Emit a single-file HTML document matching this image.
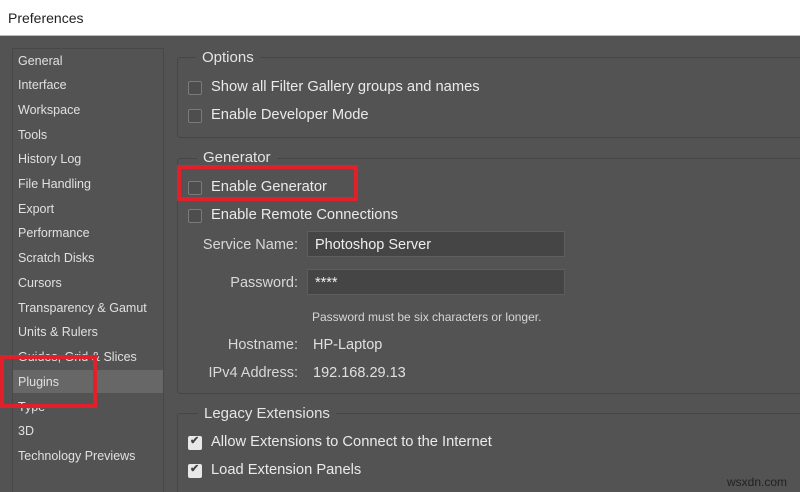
<!DOCTYPE html>
<html><head><style>
html,body{margin:0;width:800px;height:492px;overflow:hidden}
body{background:#535353;font-family:"Liberation Sans",sans-serif;position:relative}
.t{position:absolute;white-space:nowrap}
#title{position:absolute;left:0;top:0;width:800px;height:35px;background:#fff;border-bottom:1px solid #bbb}
#side{position:absolute;left:12px;top:48px;width:150px;height:450px;border:1px solid #484848;background:#535353}
.si{position:absolute;left:18px;font-size:12.5px;color:#e0e0e0}
.grp{position:absolute;left:177px;width:640px;border:1px solid #464646;border-radius:3px}
.gt{position:absolute;font-size:15px;color:#e4e4e4;background:#535353;padding:0 6px}
.cb{position:absolute;left:188px;width:12px;height:12px;border:1px solid #7a7a7a;border-radius:2px;background:#4e4e4e}
.cbc{background:#e8e8e8;border-color:#e8e8e8}
.cl{position:absolute;left:211px;font-size:14.7px;color:#eaeaea}
.lb{position:absolute;font-size:14.5px;color:#d8d8d8;text-align:right;width:200px;left:98px}
.in{position:absolute;left:307px;width:258px;height:26px;background:#454545;border:1px solid #5e5e5e;font-size:14.5px;color:#eee;box-sizing:border-box;padding:5px 7px}
.red{position:absolute;border:4px solid #e0202a;box-sizing:border-box}
</style></head><body>
<div id="title"><span class="t" style="left:8px;top:10px;font-size:14px;color:#222">Preferences</span></div>
<div id="side"></div>
<div style="position:absolute;left:13px;top:370px;width:150px;height:23px;background:#676767"></div>
<span class="si" style="top:54px">General</span>
<span class="si" style="top:78px">Interface</span>
<span class="si" style="top:103px">Workspace</span>
<span class="si" style="top:128px">Tools</span>
<span class="si" style="top:152px">History Log</span>
<span class="si" style="top:177px">File Handling</span>
<span class="si" style="top:202px">Export</span>
<span class="si" style="top:226px">Performance</span>
<span class="si" style="top:251px">Scratch Disks</span>
<span class="si" style="top:276px">Cursors</span>
<span class="si" style="top:301px">Transparency &amp; Gamut</span>
<span class="si" style="top:325px">Units &amp; Rulers</span>
<span class="si" style="top:350px">Guides, Grid &amp; Slices</span>
<span class="si" style="top:375px">Plugins</span>
<span class="si" style="top:400px">Type</span>
<span class="si" style="top:424px">3D</span>
<span class="si" style="top:449px">Technology Previews</span>

<div class="grp" style="top:57px;height:79px"></div>
<span class="gt" style="left:196px;top:49px">Options</span>
<div class="cb" style="top:81px"></div><span class="cl" style="top:79px">Show all Filter Gallery groups and names</span>
<div class="cb" style="top:109px"></div><span class="cl" style="top:107px">Enable Developer Mode</span>

<div class="grp" style="top:158px;height:234px"></div>
<span class="gt" style="left:197px;top:149px">Generator</span>
<div class="cb" style="top:181px"></div><span class="cl" style="top:179px">Enable Generator</span>
<div class="cb" style="top:209px"></div><span class="cl" style="top:207px">Enable Remote Connections</span>
<span class="lb" style="top:237px">Service Name:</span>
<div class="in" style="top:231px">Photoshop Server</div>
<span class="lb" style="top:275px">Password:</span>
<div class="in" style="top:269px">****</div>
<span class="t" style="left:312px;top:310px;font-size:12px;color:#d6d6d6">Password must be six characters or longer.</span>
<span class="lb" style="top:337px">Hostname:</span>
<span class="t" style="left:313px;top:337px;font-size:14.5px;color:#e0e0e0">HP-Laptop</span>
<span class="lb" style="top:365px">IPv4 Address:</span>
<span class="t" style="left:313px;top:365px;font-size:14.5px;color:#e0e0e0">192.168.29.13</span>

<div class="grp" style="top:413px;height:100px"></div>
<span class="gt" style="left:198px;top:405px">Legacy Extensions</span>
<div class="cb cbc" style="top:436px"></div><span class="t" style="left:190px;top:434px;font-size:11px;color:#444;font-weight:bold">✔</span><span class="cl" style="top:434px">Allow Extensions to Connect to the Internet</span>
<div class="cb cbc" style="top:464px"></div><span class="t" style="left:190px;top:462px;font-size:11px;color:#444;font-weight:bold">✔</span><span class="cl" style="top:462px">Load Extension Panels</span>
<span class="t" style="left:727px;top:475px;font-size:12px;color:#222">wsxdn.com</span>

<div class="red" style="left:177px;top:165px;width:181px;height:36px"></div>
<div class="red" style="left:0;top:355px;width:97px;height:53px"></div>
</body></html>
